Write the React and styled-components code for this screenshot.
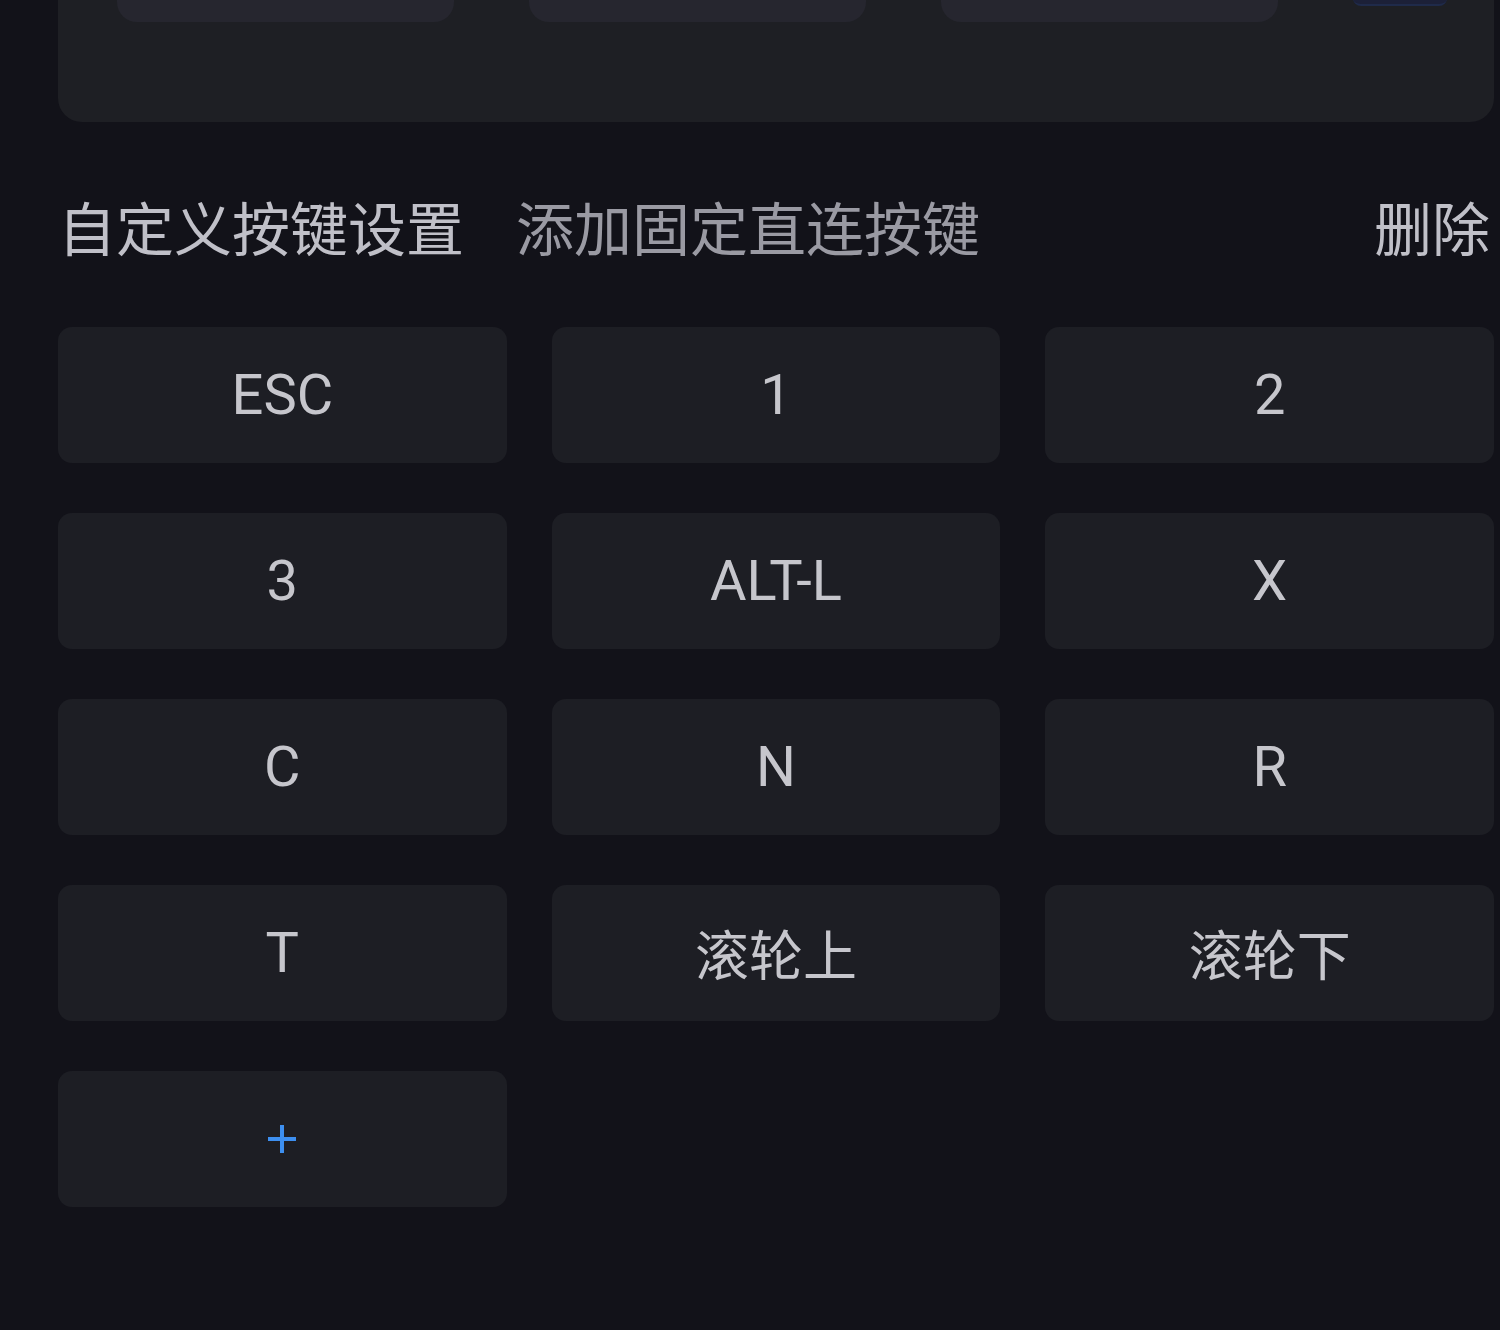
import React from 'react'
import styled, { createGlobalStyle } from 'styled-components'

const GlobalStyle = createGlobalStyle`
  html, body {
    margin: 0;
    padding: 0;
    background: #121219;
  }
  body {
    font-family: Roboto, "Noto Sans CJK SC", sans-serif;
  }
`

const Page = styled.div`
  min-height: 1330px;
  box-sizing: border-box;
  padding: 0 6px 0 58px;
  background: #121219;
  overflow: hidden;
`

const TopCard = styled.div`
  margin-top: -60px;
  height: 182px;
  border-radius: 24px;
  background: #1e1f24;
  padding-left: 59px;
  display: flex;
  gap: 75px;
  align-items: flex-start;
`

const Chip = styled.div`
  width: ${p => p.$w || 337}px;
  height: ${p => p.$h || 82}px;
  border-radius: ${p => (p.$accent ? 8 : 20)}px;
  background: ${p => (p.$accent ? '#1c2038' : '#26262f')};
  border-bottom: ${p => (p.$accent ? '2px solid #1f2a4a' : 'none')};
  flex-shrink: 0;
`

const TitleRow = styled.div`
  margin-top: 74px;
  height: 60px;
  padding-right: 4px;
  display: flex;
  align-items: center;
  font-family: "Noto Sans CJK SC", sans-serif;
  font-size: 58px;
  line-height: 1;
`

const Title = styled.div`
  color: ${p => (p.$muted ? '#9a9aa3' : '#c0c0c8')};
  margin-left: ${p => (p.$gap ? 52 : 0)}px;
  margin-right: ${p => (p.$push ? 'auto' : 0)};
  white-space: nowrap;
`

const KeyGrid = styled.div`
  margin-top: 71px;
  display: grid;
  grid-template-columns: repeat(3, 1fr);
  grid-auto-rows: 136px;
  column-gap: 45px;
  row-gap: 50px;
`

const Key = styled.div`
  border-radius: 14px;
  background: #1d1e24;
  display: flex;
  align-items: center;
  justify-content: center;
  color: #c6c6cc;
  font-family: ${p => (p.$cjk ? '"Noto Sans CJK SC", sans-serif' : 'Roboto, "Noto Sans CJK SC", sans-serif')};
  font-size: ${p => (p.$cjk ? 54 : 56)}px;
  line-height: 1;
`

const PlusIcon = () => (
  <svg width="32" height="32" viewBox="0 0 32 32">
    <path d="M16 2v28M2 16h28" stroke="#3d8ff0" strokeWidth="4" fill="none" />
  </svg>
)

const keys = [
  { label: 'ESC' },
  { label: '1' },
  { label: '2' },
  { label: '3' },
  { label: 'ALT-L' },
  { label: 'X' },
  { label: 'C' },
  { label: 'N' },
  { label: 'R' },
  { label: 'T' },
  { label: '滚轮上', cjk: true },
  { label: '滚轮下', cjk: true },
]

export default function App() {
  return (
    <Page>
      <GlobalStyle />
      <TopCard>
        <Chip />
        <Chip />
        <Chip />
        <Chip $accent $w={94} $h={64} />
      </TopCard>
      <TitleRow>
        <Title>自定义按键设置</Title>
        <Title $muted $gap $push>添加固定直连按键</Title>
        <Title>删除</Title>
      </TitleRow>
      <KeyGrid>
        {keys.map(k => (
          <Key key={k.label} $cjk={k.cjk}>{k.label}</Key>
        ))}
        <Key>
          <PlusIcon />
        </Key>
      </KeyGrid>
    </Page>
  )
}
